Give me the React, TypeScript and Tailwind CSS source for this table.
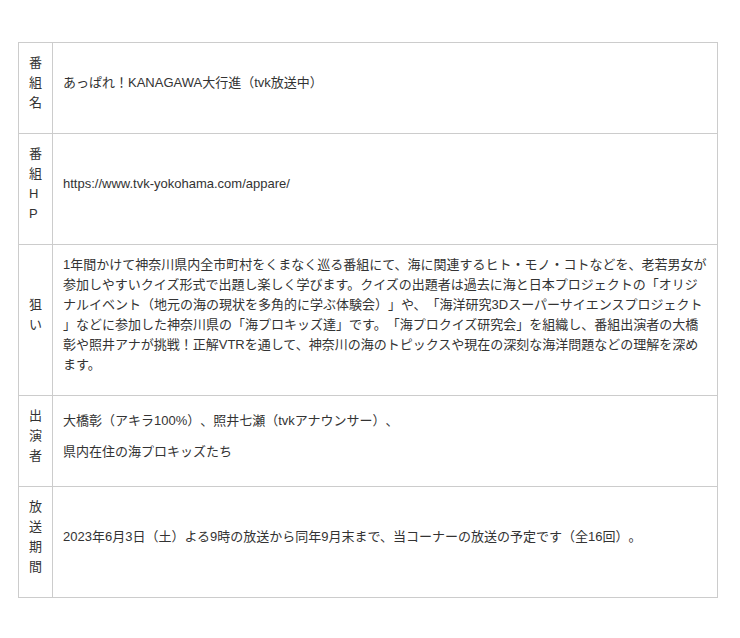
const rows: { label: string[]; body: string[] }[] = [
  { label: ['番', '組', '名'], body: ['あっぱれ！KANAGAWA大行進（tvk放送中）'] },
  { label: ['番', '組', 'H', 'P'], body: ['https://www.tvk-yokohama.com/appare/'] },
  {
    label: ['狙', 'い'],
    body: [
      '1年間かけて神奈川県内全市町村をくまなく巡る番組にて、海に関連するヒト・モノ・コトなどを、老若男女が参加しやすいクイズ形式で出題し楽しく学びます。クイズの出題者は過去に海と日本プロジェクトの「オリジナルイベント（地元の海の現状を多角的に学ぶ体験会）」や、「海洋研究3Dスーパーサイエンスプロジェクト」などに参加した神奈川県の「海プロキッズ達」です。「海プロクイズ研究会」を組織し、番組出演者の大橋彰や照井アナが挑戦！正解VTRを通して、神奈川の海のトピックスや現在の深刻な海洋問題などの理解を深めます。',
    ],
  },
  {
    label: ['出', '演', '者'],
    body: ['大橋彰（アキラ100%）、照井七瀬（tvkアナウンサー）、', '県内在住の海プロキッズたち'],
  },
  {
    label: ['放', '送', '期', '間'],
    body: ['2023年6月3日（土）よる9時の放送から同年9月末まで、当コーナーの放送の予定です（全16回）。'],
  },
];

export default function App() {
  return (
    <div
      className="min-h-[638px] bg-white pt-[42px] pl-[18px] text-[13px] leading-[20px] text-[#333] [text-spacing-trim:space-all]"
      style={{ fontFamily: '"Liberation Sans", "Noto Sans CJK JP", sans-serif' }}
    >
      <table className="w-[700px] border-collapse">
        <tbody>
          {rows.map((row, i) => (
            <tr key={i}>
              <td className="w-[34px] border border-[#ccc] p-[10px] align-middle">
                <div className="mb-[10px] flex w-[13px] flex-col">
                  {row.label.map((ch, j) => (
                    <span key={j}>{ch}</span>
                  ))}
                </div>
              </td>
              <td className="border border-[#ccc] p-[10px] align-middle">
                <div className="mb-[10px] flex flex-col gap-[11px]">
                  {row.body.map((t, j) => (
                    <p key={j} className="break-all [line-break:anywhere]">
                      {t}
                    </p>
                  ))}
                </div>
              </td>
            </tr>
          ))}
        </tbody>
      </table>
    </div>
  );
}
